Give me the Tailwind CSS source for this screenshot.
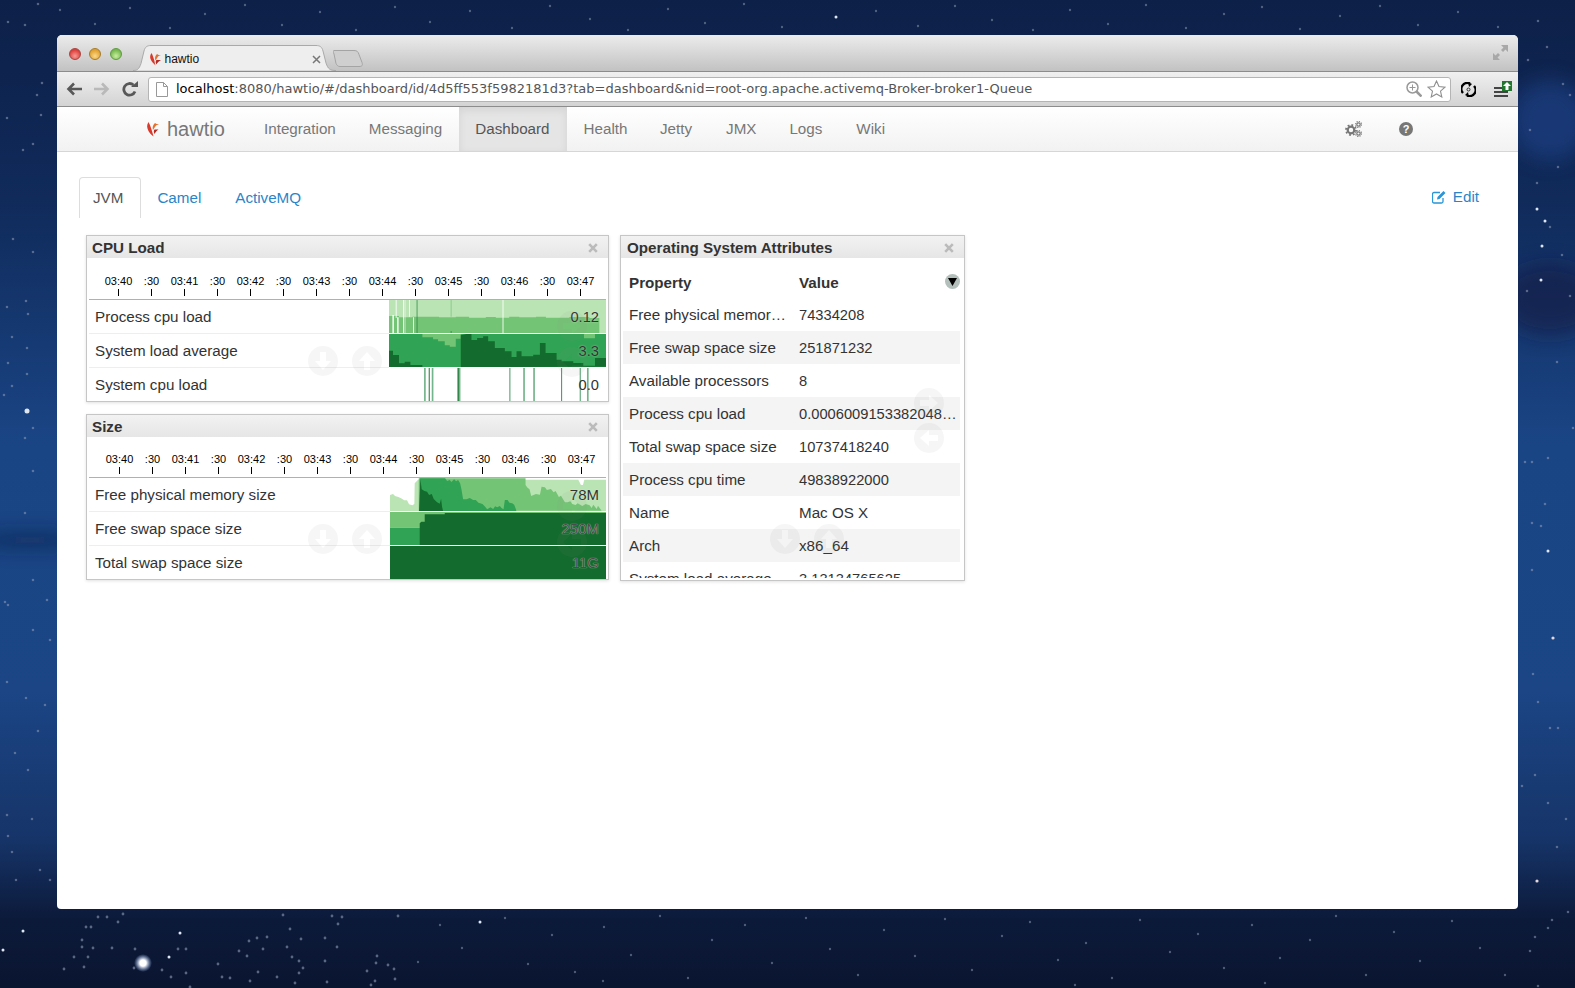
<!DOCTYPE html>
<html lang="en">
<head>
<meta charset="utf-8">
<title>hawtio</title>
<script src="https://cdn.jsdelivr.net/npm/@tailwindcss/browser@4"></script>
</head>
<body class="font-[family-name:'Liberation_Sans',sans-serif] bg-[#0d2048]">
<div class="relative w-[1575px] h-[988px] overflow-hidden pt-[35px] pl-[57px] bg-[linear-gradient(180deg,#0d2048_0%,#102a5a_20%,#1a4585_45%,#1b4585_70%,#163468_85%,#0c1a3a_93%,#0a1530_100%)]">

  <!-- desktop wallpaper -->
  <svg class="absolute inset-0" width="1575" height="988" viewBox="0 0 1575 988">
    <defs>
      <radialGradient id="glow"><stop offset="0" stop-color="#fff"/><stop offset=".35" stop-color="#fff"/><stop offset="1" stop-color="#9fc0ff" stop-opacity="0"/></radialGradient>
      <filter id="blur" x="-100%" y="-400%" width="300%" height="900%"><feGaussianBlur stdDeviation="10"/></filter>
    </defs>
    <ellipse cx="30" cy="540" rx="60" ry="7" fill="#0a1a3c" opacity=".6" filter="url(#blur)"/>
    <ellipse cx="1550" cy="300" rx="50" ry="36" fill="#14193a" opacity=".5" filter="url(#blur)"/>
    <ellipse cx="1550" cy="120" rx="40" ry="40" fill="#234a96" opacity=".5" filter="url(#blur)"/>
    <circle cx="143" cy="963" r="9" fill="url(#glow)"/>
    <g fill="none" stroke-linecap="round">
      <!-- dim stars -->
      <path stroke="#8f9db8" stroke-opacity=".6" stroke-width="2.800" d="M123 914h0M98 917h0M107 917h0M118 922h0M86 927h0M91 927h0M82 940h0M82 947h0M93 948h0M74 957h0M88 957h0M84 967h0M64 969h0M112 948h0M135 949h0M134 968h0M162 970h0M171 977h0M186 973h0M178 949h0M186 949h0M218 964h0M239 951h0M247 956h0M258 972h0M263 949h0M249 941h0M257 938h0M267 937h0M290 929h0M301 939h0M325 938h0M287 947h0M292 957h0M299 961h0M325 961h0M303 968h0M299 973h0M337 947h0M377 956h0M376 963h0M388 965h0M394 969h0M367 971h0M395 979h0M371 985h0M375 981h0M327 982h0M277 977h0M250 981h0M230 978h0M222 977h0M295 983h0M190 987h0M283 915h0M332 916h0M342 917h0M338 924h0M398 916h0"/>
      <path stroke="#8f9db8" stroke-opacity=".55" stroke-width="2.600" d="M8 22h0M25 25h0M38 4h0M37 95h0M42 83h0M41 115h0M7 118h0M23 150h0M33 144h0M13 239h0M33 252h0M7 307h0M26 301h0M28 314h0M12 337h0M8 363h0M27 348h0M27 374h0M12 386h0M4 395h0M25 438h0M33 428h0M33 471h0M25 513h0M33 580h0M5 602h0M8 605h0M33 630h0M7 682h0M26 698h0M38 731h0M15 753h0M28 770h0M7 815h0M32 819h0M8 836h0M12 852h0M47 600h0M50 640h0M45 705h0M50 880h0M16 880h0M40 870h0"/>
      <path stroke="#8f9db8" stroke-opacity=".55" stroke-width="2.600" d="M1538 21h0M1547 47h0M1563 84h0M1570 95h0M1537 183h0M1558 167h0M1550 227h0M1562 255h0M1527 291h0M1570 296h0M1557 362h0M1573 428h0M1525 462h0M1532 462h0M1548 458h0M1545 504h0M1532 523h0M1541 526h0M1532 570h0M1533 674h0M1538 702h0M1550 728h0M1558 728h0M1522 786h0M1535 775h0M1548 803h0M1566 819h0M1557 847h0M1568 912h0M1552 920h0M1548 928h0M1535 937h0M1530 951h0M1538 986h0M1528 60h0M1530 130h0"/>
      <path stroke="#8f9db8" stroke-opacity=".5" stroke-width="2.400" d="M440 925h0M462 948h0M505 918h0M528 964h0M552 935h0M575 972h0M604 927h0M631 955h0M660 916h0M688 978h0M712 940h0M745 925h0M772 963h0M806 918h0M830 949h0M858 975h0M884 930h0M915 956h0M945 919h0M972 970h0M1002 936h0M1030 922h0M1058 960h0M1086 943h0M1112 978h0M1140 920h0M1170 952h0M1198 934h0M1224 968h0M1252 925h0M1280 958h0M1310 940h0M1336 916h0M1366 975h0M1394 932h0M1420 961h0M1452 921h0M1480 948h0M1505 975h0M418 962h0M603 981h0M1075 985h0M1265 983h0M60 10h0M95 24h0M130 8h0M170 28h0M205 14h0M245 5h0M282 25h0M320 12h0M356 30h0M395 7h0M430 22h0M470 11h0M512 28h0M550 6h0M590 19h0M628 30h0M668 9h0M705 23h0M744 4h0M782 27h0M876 11h0M918 26h0M955 6h0M992 20h0M1033 30h0M1070 10h0M1108 24h0M1146 5h0M1186 28h0M1224 14h0M1262 7h0M1300 29h0M1340 16h0M1380 6h0M1418 25h0M1458 12h0M1498 27h0"/>
      <!-- bright stars -->
      <path stroke="#dce6f5" stroke-width="3" d="M23 931h0M169 957h0M3 950h0M180 933h0M1542 246h0M1537 209h0M1545 221h0M1548 551h0M1541 280h0M836 17h0M480 922h0"/>
      <path stroke="#e3d8de" stroke-width="3.200" d="M1553 638h0M1537 881h0"/>
      <path stroke="#dfe5ef" stroke-width="5" d="M27 411h0"/>
    </g>
  </svg>

  <!-- scale handles, faint over the cards -->
  <svg class="hidden">
    <symbol id="handle" viewBox="0 0 30 30">
      <path fill="#888" fill-opacity=".08" fill-rule="evenodd" d="M15 0a15 15 0 1 0 0 30a15 15 0 1 0 0-30zM12 6h6v9h5l-8 9l-8-9h5z"/>
    </symbol>
  </svg>

  <div class="relative w-[1461px] h-[874px] bg-white rounded-t-[5px] rounded-b-[4px] overflow-hidden">

    <!-- tab strip -->
    <div class="flex items-end h-[36px] pl-[11.500px] bg-[linear-gradient(180deg,#ececec,#c2c2c2)]">
      <div class="flex gap-[8.5px] self-start mt-[13px]">
        <span class="w-3 h-3 rounded-full border border-[#a8443f] bg-[radial-gradient(circle_at_50%_70%,#f79a95,#dc3f3a_70%)]"></span>
        <span class="w-3 h-3 rounded-full border border-[#a67b2a] bg-[radial-gradient(circle_at_50%_70%,#fbd987,#e0a030_70%)]"></span>
        <span class="w-3 h-3 rounded-full border border-[#5f9a42] bg-[radial-gradient(circle_at_50%_70%,#c9eea0,#75b84e_70%)]"></span>
      </div>
      <div class="relative ml-[11px] w-[203px] h-[26px] flex items-center pl-[16px] pr-[15px] pt-[2px] text-[12px] text-[#111]">
        <svg class="absolute inset-0" width="203" height="26" viewBox="0 0 203 26"><path d="M0 25.500c4 0 6-1 8-7L11 6c1-4 3-5.500 7-5.500h165c4 0 6 1.500 7 5.500l3 12c2 6 4 7.500 10 7.500" fill="#eee" stroke="#a9a9a9"/></svg>
        <svg class="relative shrink-0" width="12" height="14" viewBox="0 0 12 14"><path d="M2.500 1c-2 3-1.500 5-.5 7c1 2 2.500 3.500 4.500 5.500c-1-3-1-5-2-7.500C4 4 3.500 3 2.500 1z" fill="#d93a2b"/><path d="M8 2C6 4 5.500 6 6.500 8.500c1-1.500 2-3 2.500-4c1-1 2-1.500 3-1.500c-2 0-3 0-4-1z" fill="#e5712f"/><path d="M7.500 8c-1 1-1 2.500-.2 4.500c1-1.500 2.700-3.500 4.700-4.500c-2 0-3.500 0-4.500 0z" fill="#b52a22"/></svg>
        <span class="relative ml-[4px]">hawtio</span>
        <svg class="relative ml-auto" width="9" height="9" viewBox="0 0 9 9"><path d="M1 1l7 7M8 1l-7 7" stroke="#777" stroke-width="1.500"/></svg>
      </div>
      <svg class="-ml-[3px] mb-[4px]" width="31" height="17" viewBox="0 0 31 17"><path d="M1 .5h20c3 0 4 1 5 4l3 8c1 3 0 4-3 4H7c-2 0-3-1-4-3L1 4c-1-2-1-3.500 0-3.500z" fill="#cfcfcf" stroke="#a4a4a4"/></svg>
      <svg class="ml-auto self-start mt-[10px] mr-[10px]" width="15" height="15" viewBox="0 0 15 15" fill="#a8a8a8"><path d="M8 0h7v7l-2.500-2.500L10 7L8 5l2.500-2.500zM0 8l2.500 2.500L5 8l2 2l-2.500 2.500L7 15H0z"/></svg>
    </div>

    <!-- toolbar -->
    <div class="flex items-center h-[36px] pl-[9px] border-y border-[#8c8c8c] bg-[linear-gradient(180deg,#f0f0f0,#d3d3d3)]">
      <svg width="16" height="14" viewBox="0 0 16 14" fill="none" stroke="#585858" stroke-width="2.600"><path d="M16 7H3M8 1.500L2.500 7L8 12.500"/></svg>
      <svg class="ml-[12px]" width="16" height="14" viewBox="0 0 16 14" fill="none" stroke="#b9b9b9" stroke-width="2.600"><path d="M0 7h13M8 1.500L13.500 7L8 12.500"/></svg>
      <svg class="ml-[12px]" width="16" height="16" viewBox="0 0 16 16"><path d="M13 10.500A5.800 5.800 0 1 1 11.500 4" fill="none" stroke="#585858" stroke-width="2.800"/><path d="M9 6h7V0z" fill="#585858"/></svg>
      <div class="flex items-center ml-[10px] w-[1303px] h-[25px] pl-[7px] pr-[4px] bg-white border border-[#b4b4b4] rounded-[3px] text-[#555] font-[family-name:'DejaVu_Sans',sans-serif] whitespace-nowrap">
        <svg class="shrink-0" width="12" height="15" viewBox="0 0 12 15"><path d="M.5.500h7l4 4v10H.500z" fill="#fff" stroke="#999"/><path d="M7.500.500v4h4" fill="none" stroke="#999"/></svg>
        <span class="ml-[8px] text-[13px]"><span class="text-black">localhost</span>:8080/hawtio/#/dashboard/id/4d5ff553f5982181d3?tab=dashboard&amp;nid=root-org.apache.activemq-Broker-broker1-Queue</span>
        <svg class="ml-auto shrink-0" width="16" height="16" viewBox="0 0 16 16" fill="none" stroke="#999" stroke-width="1.500"><circle cx="6.500" cy="6.500" r="5.500"/><path d="M10.500 10.500l5 5" stroke-width="2.500"/><path d="M6.500 3.500v6M3.500 6.500h6" stroke-width="1"/></svg>
        <svg class="ml-[5px] shrink-0" width="19" height="18" viewBox="0 0 19 18"><path d="M9.500 1l2.500 5.500l6 .6l-4.500 4l1.300 5.900l-5.300-3l-5.300 3l1.300-5.900l-4.500-4l6-.6z" fill="#fff" stroke="#8f8f8f" stroke-width="1.100"/></svg>
      </div>
      <svg class="ml-[10px]" width="15" height="15" viewBox="0 0 15 15" fill="none"><path d="M2 11A6 6 0 0 1 9 1.500M13 4a6 6 0 0 1-7 9.500" stroke="#000" stroke-width="2.400"/><path d="M7 0l4 2l-3 3zM8 15l-4-2l3-3z" fill="#000"/><circle cx="7.500" cy="7.500" r="1.500" stroke="#333"/></svg>
      <div class="relative ml-[18px] w-[18px] h-[16px] flex flex-col justify-end gap-[2px]">
        <span class="w-[14px] h-[2px] bg-[#444]"></span>
        <span class="w-[14px] h-[2px] bg-[#444]"></span>
        <span class="w-[14px] h-[2px] bg-[#444]"></span>
        <svg class="absolute right-0 top-0" width="10" height="10" viewBox="0 0 10 10"><rect width="10" height="10" fill="#22762e"/><path d="M5 1L9 5H6.500V9h-3V5H1z" fill="#fff"/></svg>
      </div>
    </div>

    <!-- hawtio navbar -->
    <div class="flex items-stretch h-[45px] pl-[89px] pr-[105px] border-b border-[#d6d6d6] bg-[linear-gradient(180deg,#fff,#f2f2f2)] text-[15.200px] text-[#777]">
      <div class="flex items-center w-[102px]">
        <svg width="13" height="16" viewBox="0 0 13 16"><path d="M2.500 1C.5 4 1 6.500 2 9c1 2.500 3 4.500 5.500 6.500c-1-3.500-1.500-6-2.500-8.500C4.500 5 3.500 3 2.500 1z" fill="#d93a2b"/><path d="M9 2C7 4 6 6 7 9c1-1.500 2-3 3-4.500c1-.8 2-1 3-1.500c-2 0-3 0-4-1z" fill="#e5712f"/><path d="M8.500 8.500c-1 1.200-.8 2.500 0 4.500c1-1.500 2-3.500 4-4.500c-2 0-3 0-4 0z" fill="#b52a22"/></svg>
        <span class="ml-[8px] text-[20px] font-light text-[#777]">hawtio</span>
      </div>
      <a class="flex items-center pl-[16px] pr-[17px]">Integration</a>
      <a class="flex items-center pl-[16px] pr-[16.500px]">Messaging</a>
      <a class="flex items-center pl-[16.500px] pr-[17px] bg-[#e5e5e5] text-[#555] shadow-[inset_0_3px_8px_rgba(0,0,0,.08)]">Dashboard</a>
      <a class="flex items-center pl-[17px] pr-[15.500px]">Health</a>
      <a class="flex items-center pl-[17px] pr-[17px]">Jetty</a>
      <a class="flex items-center pl-[17px] pr-[16px]">JMX</a>
      <a class="flex items-center pl-[17px] pr-[17px]">Logs</a>
      <a class="flex items-center pl-[17px] pr-[16px]">Wiki</a>
      <div class="ml-auto flex items-center">
        <svg width="17" height="16" viewBox="0 0 17 16" fill="none" stroke="#777"><circle cx="6" cy="9" r="3.300" stroke-width="2.200"/><circle cx="6" cy="9" r="5" stroke-width="1.800" stroke-dasharray="1.800 2.100"/><circle cx="13.500" cy="3.500" r="1.700" stroke-width="1.200"/><circle cx="13.500" cy="3.500" r="3" stroke-width="1.100" stroke-dasharray="1.200 1.150"/><circle cx="13.500" cy="12.500" r="1.700" stroke-width="1.200"/><circle cx="13.500" cy="12.500" r="3" stroke-width="1.100" stroke-dasharray="1.200 1.150"/></svg>
        <span class="ml-[37px] flex items-center justify-center w-[14px] h-[14px] rounded-full bg-[#777] text-white text-[11px] font-bold">?</span>
      </div>
    </div>

    <!-- dashboard tabs -->
    <div class="flex items-center h-[41px] mt-[25px] pl-[22px] pr-[39px] text-[15.200px] text-[#2a85c8]">
      <a class="flex items-center h-full pl-[13px] pr-[17px] pt-px text-[#555] bg-white border border-[#ddd] border-b-0 rounded-t-[4px]">JVM</a>
      <a class="flex items-center h-full pt-px ml-[2px] pl-[14px] pr-[16px]">Camel</a>
      <a class="flex items-center h-full pt-px ml-[2px] px-[16px]">ActiveMQ</a>
      <a class="ml-auto flex items-center">
        <svg width="15" height="14" viewBox="0 0 15 14" fill="none" stroke="#2a95d8"><path d="M11 8v3.500a1.500 1.500 0 0 1-1.500 1.500H2A1.500 1.500 0 0 1 .500 11.500V4A1.500 1.500 0 0 1 2 2.500h6" stroke-width="1.300"/><path d="M5 9.500l.5-2.500L11.500 1l2 2l-6 6z" fill="#2a95d8" stroke="none"/></svg>
        <span class="ml-[6px]">Edit</span>
      </a>
    </div>

    <!-- cards -->
    <div class="flex items-start gap-[11px] mt-[17px] pl-[29px]">
      <div class="w-[523px]">

        <!-- CPU Load -->
        <div class="relative border border-[#c6c6c6] shadow-[0_1px_3px_rgba(0,0,0,.12)]">
          <div class="flex items-center justify-between h-[22px] pt-[2px] pl-[5px] pr-[10px] bg-[linear-gradient(180deg,#f2f2f2,#e6e6e6)] text-[15.200px] font-bold text-[#333]">
            <span>CPU Load</span>
            <svg width="10" height="10" viewBox="0 0 10 10"><path d="M1.200 1.200l7.600 7.600M8.800 1.200L1.200 8.800" stroke="#bbb" stroke-width="2.600"/></svg>
          </div>
          <div class="flex items-end h-[42px] mx-[2px] border-b border-[#b0b0b0]">
            <svg width="517" height="40" viewBox="0 0 517 40" class="text-[11px] fill-black">
              <path d="M29.500 30v7m33-7v7m33-7v7m33-7v7m33-7v7m33-7v7m33-7v7m33-7v7m33-7v7m33-7v7m33-7v7m33-7v7m33-7v7m33-7v7m33-7v7" stroke="#000"/>
              <g text-anchor="middle">
                <text x="29.500" y="26">03:40</text><text x="62.500" y="26">:30</text><text x="95.500" y="26">03:41</text><text x="128.500" y="26">:30</text><text x="161.500" y="26">03:42</text><text x="194.500" y="26">:30</text><text x="227.500" y="26">03:43</text><text x="260.500" y="26">:30</text><text x="293.500" y="26">03:44</text><text x="326.500" y="26">:30</text><text x="359.500" y="26">03:45</text><text x="392.500" y="26">:30</text><text x="425.500" y="26">03:46</text><text x="458.500" y="26">:30</text><text x="491.500" y="26">03:47</text>
              </g>
            </svg>
          </div>
          <div class="mx-[2px] text-[15.200px] text-[#333]">
            <div class="flex h-[34px]">
              <div class="flex-1 flex items-center pl-[6px] pt-px border-b border-[#eee]">Process cpu load</div>
              <div class="relative w-[217px] h-[33px]">
                <svg class="block" width="217" height="33" viewBox="28 210 650 99" preserveAspectRatio="none">
                  <rect x="28" y="210" width="650" height="99" fill="#bae4b3"/>
                  <path d="M28 258h30v4h40v-2h80v2h50v-2h40v3h50v-2h30v2h40v-3h30v2h50v-2h30v3h70v-2h60v3h30v47H28z" fill="#74c476"/>
                  <path d="M38 255h5v54h-5zM48 210h3v54h-3zM52 262h5v47h-5zM70 210h3v99h-3zM75 210h2v99h-2zM88 210h3v50h-3zM100 262h3v47h-3zM368 210h3v99h-3z" fill="#fff" fill-opacity=".85"/>
                  <path d="M111 210h2v99h-2zM213 303h2v6h-2z" fill="#1d7a38"/>
                  <path d="M213 210h2v50h-2z" fill="#74c476"/>
                </svg>
                <span class="absolute right-[7px] top-[7px] leading-[20px] text-[14.700px] [text-shadow:0_0_2px_rgba(255,255,255,.5)]">0.12</span>
              </div>
            </div>
            <div class="flex h-[34px]">
              <div class="flex-1 flex items-center pl-[6px] pt-px border-b border-[#eee]">System load average</div>
              <div class="relative w-[217px] h-[33px]">
                <svg class="block" width="217" height="33" viewBox="28 312 650 99" preserveAspectRatio="none">
                  <rect x="28" y="312" width="650" height="99" fill="#31a354"/>
                  <path d="M128 312v10h32v6h15v6h20v12h15v4h18v-24h15v-14zM612 312v13h33v-13z" fill="#74c476"/>
                  <path d="M28 411v-49h12v13h18v25h17v-5h17v10h36v6zM243 411v-95l17-4h15v18h17v-6h18v-5h15v15h20v20h30v10h20v17h15v-17h15v15h35v-5h20v-35h17v30h33v20h15v5h35v5h30v8h35v-23h33v26z" fill="#136b2d"/>
                </svg>
                <span class="absolute right-[7px] top-[7px] leading-[20px] text-[14.700px] [text-shadow:0_0_2px_rgba(255,255,255,.5)]">3.3</span>
              </div>
            </div>
            <div class="flex h-[33px]">
              <div class="flex-1 flex items-center pl-[6px] pt-px">System cpu load</div>
              <div class="relative w-[217px] h-[33px]">
                <svg class="block" width="217" height="33" viewBox="28 414 650 99" preserveAspectRatio="none">
                  <path d="M133 414h5v99h-5zM156 414h5v99h-5zM232 414h3v99h-3zM238 414h4v99h-4zM388 414h4v99h-4zM430 414h5v99h-5zM460 414h5v99h-5zM599 414h4v99h-4zM621 414h5v99h-5z" fill="#74b48a"/>
                  <path d="M147 414h3v99h-3zM235 414h3v99h-3zM544 414h2.500v99H544z" fill="#1d7a38"/>
                </svg>
                <span class="absolute right-[7px] top-[7px] leading-[20px] text-[14.700px]">0.0</span>
              </div>
            </div>
          </div>
          <svg class="absolute left-[221px] top-[110px]" width="30" height="30"><use href="#handle"/></svg>
          <svg class="absolute left-[265px] top-[110px] rotate-180" width="30" height="30"><use href="#handle"/></svg>
          <svg class="absolute left-[470px] top-[75px] -rotate-90" width="30" height="30"><use href="#handle"/></svg>
          <svg class="absolute left-[470px] top-[111px] rotate-90" width="30" height="30"><use href="#handle"/></svg>
        </div>

        <!-- Size -->
        <div class="relative mt-[12px] border border-[#c6c6c6] shadow-[0_1px_3px_rgba(0,0,0,.12)]">
          <div class="flex items-center justify-between h-[22px] pt-[2px] pl-[5px] pr-[10px] bg-[linear-gradient(180deg,#f2f2f2,#e6e6e6)] text-[15.200px] font-bold text-[#333]">
            <span>Size</span>
            <svg width="10" height="10" viewBox="0 0 10 10"><path d="M1.200 1.200l7.600 7.600M8.800 1.200L1.200 8.800" stroke="#bbb" stroke-width="2.600"/></svg>
          </div>
          <div class="flex items-end h-[41px] mx-[2px] border-b border-[#b0b0b0]">
            <svg class="ml-px text-[11px]" width="516" height="40" viewBox="0 0 516 40">
              <path d="M29.500 30v7m33-7v7m33-7v7m33-7v7m33-7v7m33-7v7m33-7v7m33-7v7m33-7v7m33-7v7m33-7v7m33-7v7m33-7v7m33-7v7m33-7v7" stroke="#000"/>
              <g text-anchor="middle">
                <text x="29.500" y="26">03:40</text><text x="62.500" y="26">:30</text><text x="95.500" y="26">03:41</text><text x="128.500" y="26">:30</text><text x="161.500" y="26">03:42</text><text x="194.500" y="26">:30</text><text x="227.500" y="26">03:43</text><text x="260.500" y="26">:30</text><text x="293.500" y="26">03:44</text><text x="326.500" y="26">:30</text><text x="359.500" y="26">03:45</text><text x="392.500" y="26">:30</text><text x="425.500" y="26">03:46</text><text x="458.500" y="26">:30</text><text x="491.500" y="26">03:47</text>
              </g>
            </svg>
          </div>
          <div class="mx-[2px] text-[15.200px] text-[#333]">
            <div class="flex h-[34px]">
              <div class="flex-1 flex items-center pl-[6px] pt-px border-b border-[#eee]">Free physical memory size</div>
              <div class="relative w-[216px] h-[33px]">
                <svg class="block" width="216" height="33" viewBox="31 204 647 99" preserveAspectRatio="none">
                  <path d="M31 303v-48l9-3l6 6l10 3l8 4l10 6l8 0l6 12l10 3l6-4l1-62l10-11h480l8 16h6l4-16h65v99z" fill="#bae4b3"/>
                  <path d="M117 303V205h320v20l6 8l6 5l5 20l14-6l12 2l5-24l10 2l6 8l12-3l8 10l6-4l10 18l6-4l12 20l8 0l8-3l6 8l10 3l6-5l14 8l10-6l12 4l6 8l5-10l10 13l4-10l10 14v1z" fill="#74c476"/>
                  <path d="M120 303V205h76l6 8l8-3l5 6l8-8l6 6l6-4l6 10l4 18l5 30l10 0l10-4l10 6l8 0l8 8l12 4l8 8l6 8l10-6l8 5l6-8l6 3l8-4l5 6l6 4l4-28h8l6 8l8 2l6 4l6 16v9z" fill="#31a354"/>
                  <path d="M118 303l4-95l4 30l8 5l8 2l6 10l8-3l6 15l10 10l8 4l4-15l3 25l3 12z" fill="#136b2d"/>
                </svg>
                <span class="absolute right-[7px] top-[7px] leading-[20px] text-[15px] [text-shadow:0_0_2px_rgba(255,255,255,.5)]">78M</span>
              </div>
            </div>
            <div class="flex h-[34px]">
              <div class="flex-1 flex items-center pl-[6px] pt-px border-b border-[#eee]">Free swap space size</div>
              <div class="relative w-[216px] h-[33px]">
                <svg class="block" width="216" height="33" viewBox="31 306 647 99" preserveAspectRatio="none">
                  <rect x="31" y="306" width="647" height="47" fill="#74c476"/>
                  <rect x="31" y="353" width="90" height="52" fill="#31a354"/>
                  <path d="M120 405v-65l5-5h10v-22h60v-4h483v96z" fill="#136b2d"/>
                </svg>
                <span class="absolute right-[7px] top-[7px] leading-[20px] text-[15px] text-[#4a4a4a] [text-shadow:0_0_1px_rgba(255,255,255,.9)]">250M</span>
              </div>
            </div>
            <div class="flex h-[33px]">
              <div class="flex-1 flex items-center pl-[6px] pt-px">Total swap space size</div>
              <div class="relative w-[216px] h-[33px] bg-[#136b2d]">
                <span class="absolute right-[7px] top-[7px] leading-[20px] text-[15px] text-[#4a4a4a] [text-shadow:0_0_1px_rgba(255,255,255,.9)]">11G</span>
              </div>
            </div>
          </div>
          <svg class="absolute left-[221px] top-[109px]" width="30" height="30"><use href="#handle"/></svg>
          <svg class="absolute left-[265px] top-[109px] rotate-180" width="30" height="30"><use href="#handle"/></svg>
          <svg class="absolute left-[470px] top-[76px] -rotate-90" width="30" height="30"><use href="#handle"/></svg>
          <svg class="absolute left-[470px] top-[112px] rotate-90" width="30" height="30"><use href="#handle"/></svg>
        </div>
      </div>

      <!-- Operating System Attributes -->
      <div class="relative w-[345px] h-[346px] border border-[#c6c6c6] shadow-[0_1px_3px_rgba(0,0,0,.12)]">
        <div class="flex items-center justify-between h-[22px] pt-[2px] pl-[6px] pr-[10px] bg-[linear-gradient(180deg,#f2f2f2,#e6e6e6)] text-[15.200px] font-bold text-[#333]">
          <span>Operating System Attributes</span>
          <svg width="10" height="10" viewBox="0 0 10 10"><path d="M1.200 1.200l7.600 7.600M8.800 1.200L1.200 8.800" stroke="#bbb" stroke-width="2.600"/></svg>
        </div>
        <div class="h-[320px] ml-[2px] mr-[4px] overflow-hidden text-[15.200px] text-[#333]">
          <table class="w-full table-fixed border-collapse">
            <thead>
              <tr class="h-[40px] font-bold text-left">
                <th class="w-[170px] pl-[6px] pt-[11px]">Property</th>
                <th class="relative pl-[6px] pt-[11px]">Value
                  <span class="absolute right-0 top-[16px] flex items-center justify-center w-[15px] h-[15px] rounded-full bg-[#b3bfba]">
                    <svg width="9" height="8" viewBox="0 0 9 8"><path d="M0 0h9L4.500 8z" fill="#000"/></svg>
                  </span>
                </th>
              </tr>
            </thead>
            <tbody>
              <tr class="h-[33px]"><td class="pl-[6px] pr-[3px] pt-[2px] truncate">Free physical memory size</td><td class="pl-[6px] pr-[2px] pt-[2px] truncate text-[14.700px]">74334208</td></tr>
              <tr class="h-[33px] bg-[#f4f4f4]"><td class="pl-[6px] pr-[3px] pt-[2px] truncate">Free swap space size</td><td class="pl-[6px] pr-[2px] pt-[2px] truncate text-[14.700px]">251871232</td></tr>
              <tr class="h-[33px]"><td class="pl-[6px] pr-[3px] pt-[2px] truncate">Available processors</td><td class="pl-[6px] pr-[2px] pt-[2px] truncate text-[14.700px]">8</td></tr>
              <tr class="h-[33px] bg-[#f4f4f4]"><td class="pl-[6px] pr-[3px] pt-[2px] truncate">Process cpu load</td><td class="pl-[6px] pr-[2px] pt-[2px] truncate text-[14.700px]">0.00060091533820488215</td></tr>
              <tr class="h-[33px]"><td class="pl-[6px] pr-[3px] pt-[2px] truncate">Total swap space size</td><td class="pl-[6px] pr-[2px] pt-[2px] truncate text-[14.700px]">10737418240</td></tr>
              <tr class="h-[33px] bg-[#f4f4f4]"><td class="pl-[6px] pr-[3px] pt-[2px] truncate">Process cpu time</td><td class="pl-[6px] pr-[2px] pt-[2px] truncate text-[14.700px]">49838922000</td></tr>
              <tr class="h-[33px]"><td class="pl-[6px] pr-[3px] pt-[2px] truncate">Name</td><td class="pl-[6px] pr-[2px] pt-[2px] truncate">Mac OS X</td></tr>
              <tr class="h-[33px] bg-[#f4f4f4]"><td class="pl-[6px] pr-[3px] pt-[2px] truncate">Arch</td><td class="pl-[6px] pr-[2px] pt-[2px] truncate">x86_64</td></tr>
              <tr class="h-[33px]"><td class="pl-[6px] pr-[3px] pt-[2px] truncate">System load average</td><td class="pl-[6px] pr-[2px] pt-[2px] truncate text-[14.700px]">3.13134765625</td></tr>
            </tbody>
          </table>
        </div>
        <svg class="absolute left-[293px] top-[152px] -rotate-90" width="30" height="30"><use href="#handle"/></svg>
        <svg class="absolute left-[293px] top-[187px] rotate-90" width="30" height="30"><use href="#handle"/></svg>
        <svg class="absolute left-[149px] top-[288px]" width="30" height="30"><use href="#handle"/></svg>
        <svg class="absolute left-[193px] top-[288px] rotate-180" width="30" height="30"><use href="#handle"/></svg>
      </div>
    </div>
  </div>
</div>
</body>
</html>
